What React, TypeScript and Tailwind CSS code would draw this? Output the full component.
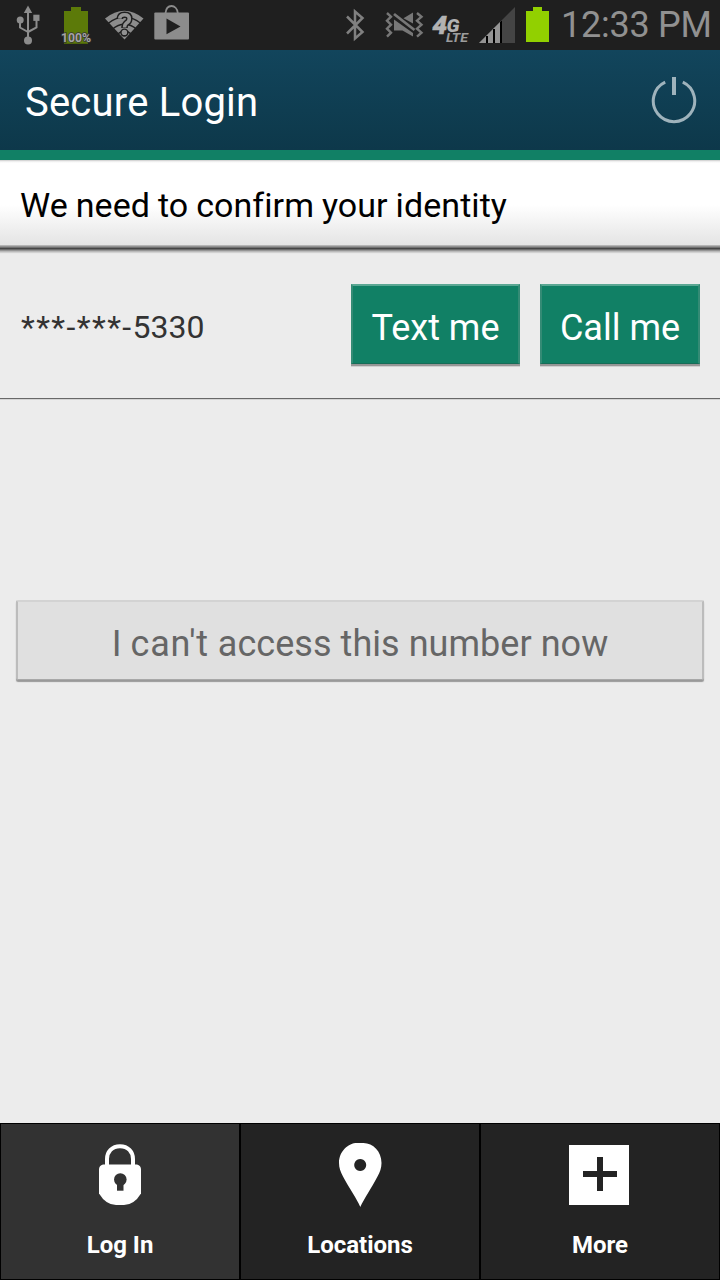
import React from "react";

function UsbIcon() {
  return (
    <svg width="26" height="50" viewBox="15 0 26 50" fill="none" stroke="#8c8c8c" strokeWidth="2">
      <path d="M28 11v28M20 21v6.500l8 4.500M36.500 19v8.500l-8.500 4.500" />
      <path d="M28 5.500l4.200 7.500h-8.400z" fill="#8c8c8c" stroke="none" />
      <circle cx="20.200" cy="20" r="3.500" fill="#8c8c8c" stroke="none" />
      <rect x="33.300" y="14.700" width="6.200" height="6.200" fill="#8c8c8c" stroke="none" />
      <circle cx="28" cy="40.500" r="4" fill="#8c8c8c" stroke="none" />
    </svg>
  );
}

function ChargeIcon() {
  return (
    <svg className="ml-[18px]" width="34" height="50" viewBox="59 0 34 50">
      <path d="M71 7h10v4h7v32.700H64V11h7z" fill="#5c7a09" />
      <text
        x="76"
        y="42"
        textAnchor="middle"
        fontFamily="Roboto, sans-serif"
        fontSize="12.500"
        fontWeight="700"
        fill="#a6a6a6"
        stroke="#333"
        strokeWidth="1.500"
        paintOrder="stroke"
        textLength="30"
        lengthAdjust="spacingAndGlyphs"
      >
        100%
      </text>
    </svg>
  );
}

function WifiIcon() {
  return (
    <svg className="ml-[11px]" width="42" height="50" viewBox="104 0 42 50">
      <path d="M105 18.500Q124.500 3 143.500 18.500L124.500 39.500z" fill="#8c8c8c" />
      <path
        d="M108 23.500Q124.500 10.500 141 23.500M112 29.500Q124.500 19 137 29.500M117 34.500Q124.500 28 132 34.500"
        fill="none"
        stroke="#1f1f1f"
        strokeWidth="1.400"
      />
      <path
        d="M119.700 18.700Q120 14.800 124.600 14.800Q129.300 14.800 129.300 18.700Q129.300 21.500 126.500 23Q124.500 24.500 124.500 28"
        fill="none"
        stroke="#1f1f1f"
        strokeWidth="6.500"
      />
      <circle cx="124.400" cy="32.600" r="4.200" fill="#1f1f1f" />
      <path
        d="M119.700 18.700Q120 14.800 124.600 14.800Q129.300 14.800 129.300 18.700Q129.300 21.500 126.500 23Q124.500 24.500 124.500 27.500"
        fill="none"
        stroke="#929292"
        strokeWidth="3.600"
      />
      <circle cx="124.400" cy="32.400" r="2.700" fill="#929292" />
    </svg>
  );
}

function StoreIcon() {
  return (
    <svg className="ml-[7px]" width="38" height="50" viewBox="153 0 38 50">
      <path d="M165.500 13c.5-4.500 3-7 6-7s5.800 2.500 6.300 7" fill="none" stroke="#8c8c8c" strokeWidth="1.800" />
      <rect x="154.300" y="12.600" width="34.700" height="27" rx="1" fill="#8c8c8c" />
      <path d="M166.500 18.600v15.600l14-7.800z" fill="#1f1f1f" />
    </svg>
  );
}

function BluetoothIcon() {
  return (
    <svg width="22" height="50" viewBox="344 0 22 50" fill="none" stroke="#808080" strokeWidth="2.500">
      <path d="M347 16.500l15.500 15.500-7.500 6.500V11.500l7.500 6.500L347 33.500" />
    </svg>
  );
}

function SilentIcon() {
  return (
    <svg className="ml-[18px]" width="40" height="50" viewBox="384 0 40 50">
      <path
        d="M387 13l4 3.700-4 4 4 4-4 4 4 4-4 4M417 13l4.500 3.700-4.500 4 4.500 4-4.500 4 4.500 4-4.500 4"
        fill="none"
        stroke="#777"
        strokeWidth="2.400"
      />
      <path d="M394 19.500L413 33V36.500L402.500 30.500H394zM403.500 18.300L413 12.500v11z" fill="#777" />
      <path d="M394 14L414.500 30" stroke="#777" strokeWidth="2.800" />
    </svg>
  );
}

function LteIcon() {
  return (
    <svg className="ml-[8px]" width="40" height="50" viewBox="432 0 40 50" fontFamily="Roboto, sans-serif" fontStyle="italic">
      <text x="432.300" y="34" fontSize="25.500" fontWeight="900" fill="#b2b2b2" stroke="#b2b2b2" strokeWidth=".5" textLength="15" lengthAdjust="spacingAndGlyphs">
        4
      </text>
      <text x="446.500" y="32" fontSize="18.500" fontWeight="900" fill="#b2b2b2" textLength="13" lengthAdjust="spacingAndGlyphs">
        G
      </text>
      <text x="446" y="42" fontSize="12.500" fontWeight="700" fill="#9c9c9c" textLength="22" lengthAdjust="spacingAndGlyphs">
        LTE
      </text>
    </svg>
  );
}

function SignalIcon() {
  return (
    <svg className="ml-[6px]" width="38" height="50" viewBox="478 0 38 50">
      <path d="M479 43L515 7V43z" fill="#444" />
      <path d="M479 43L502 20V43z" fill="#949494" />
      <path d="M486 36h2v7h-2zM493 29h2v14h-2zM500 22l2-2v23h-2z" fill="#000" />
    </svg>
  );
}

function BatteryIcon() {
  return (
    <svg className="ml-[9px]" width="25" height="50" viewBox="525 0 25 50">
      <path d="M533 7h9v4h7v31h-23V11h7z" fill="#92d000" />
    </svg>
  );
}

function StatusBar() {
  return (
    <div className="flex h-[50px] w-full items-center bg-[#1f1f1f] pl-[15px]">
      <UsbIcon />
      <ChargeIcon />
      <WifiIcon />
      <StoreIcon />
      <div className="ml-[153px] flex items-center">
        <BluetoothIcon />
        <SilentIcon />
        <LteIcon />
        <SignalIcon />
        <BatteryIcon />
        <span className="ml-[11px] text-[36px] leading-[50px] tracking-[-0.25px] whitespace-nowrap text-[#919191]">12:33 PM</span>
      </div>
    </div>
  );
}

function Header() {
  return (
    <header className="flex h-[110px] items-center justify-between border-b-[10px] border-[#118065] bg-linear-to-b from-[#12455c] to-[#0d384a] pr-[23px] pl-[25px]">
      <h1 className="pt-1.5 text-[40px] leading-[50px] tracking-[0.2px] text-white">Secure Login</h1>
      <svg width="46" height="50" viewBox="651 75 46 50" fill="none" stroke="#9fb3bc">
        <path d="M665.200 82.200A20.700 20.700 0 1 0 682.800 82.200" strokeWidth="3" />
        <path d="M674 77v18" strokeWidth="4" />
      </svg>
    </header>
  );
}

function ActionButton({ label, width }: { label: string; width: "wide" | "narrow" }) {
  return (
    <button
      className={`${width === "wide" ? "w-[169px]" : "w-[160px]"} h-[80px] border-x-2 border-t-2 border-b border-x-[#348b75] border-t-[#5ba793] border-b-[#176c57] bg-[#118065] pt-[7px] text-[36px] leading-[50px] whitespace-nowrap text-white shadow-[0_2px_0_#969696,0_3px_0_#d0d0d0]`}
    >
      {label}
    </button>
  );
}

function LockIcon() {
  return (
    <svg width="60" height="68" viewBox="90 1141 60 68">
      <path d="M107 1167v-8c0-7 5-12.800 13-12.800s13 5.800 13 12.800v8" fill="none" stroke="#fff" strokeWidth="4" />
      <path
        d="M103 1164.500h34q4 1 4 5v24Q134 1205 124 1205h-8Q106 1205 99 1193.500v-24q0-4 4-5z"
        fill="#fff"
      />
      <circle cx="120.300" cy="1179.500" r="6.300" fill="#323232" />
      <path d="M117 1183h6.500v7.700H117z" fill="#323232" />
    </svg>
  );
}

function PinIcon() {
  return (
    <svg width="60" height="68" viewBox="330 1141 60 68">
      <path
        fillRule="evenodd"
        fill="#fff"
        d="M360.300 1207C357 1199 349 1188 343 1176.500C340.500 1171.500 339 1168 339 1163C339 1151 348.500 1143 357 1143H363.500C373 1143 381.500 1151.500 381.500 1163C381.500 1168 380 1172 377.500 1176.500C371.500 1188 364 1199 360.300 1207zM360.200 1159a6 6 0 1 0 .01 0z"
      />
    </svg>
  );
}

function PlusIcon() {
  return (
    <svg className="-ml-0.5" width="60" height="68" viewBox="569 1141 60 68">
      <path fill="#fff" d="M569 1145h60v60h-60z" />
      <path fill="#232323" d="M597 1157h6v14h14v6h-14v14h-6v-14h-14v-6h14z" />
    </svg>
  );
}

function Tab({ label, active, icon }: { label: string; active?: boolean; icon: React.ReactNode }) {
  return (
    <button
      className={`${active ? "bg-[#323232]" : "bg-[#232323]"} flex h-[157px] w-[240px] flex-col items-center border border-black pt-[17px]`}
    >
      {icon}
      <span className="mt-[21px] text-[24px] leading-[30px] font-bold text-white">{label}</span>
    </button>
  );
}

export default function App() {
  return (
    <div className="flex h-[1280px] w-[720px] flex-col overflow-hidden bg-[#ececec] font-['Roboto',sans-serif]">
      <StatusBar />
      <Header />
      <div className="flex h-[85px] items-center bg-[linear-gradient(#c4c4c4_0,#e8e8e8_1px,#f6f6f6_2px,#fff_3px,#fff_45px,#e4e4e4_85px)] pt-[5px] pl-5">
        <p className="text-[34px] leading-[50px] tracking-[0.07px] [word-spacing:-0.6px] whitespace-nowrap text-black">
          We need to confirm your identity
        </p>
      </div>
      <div className="h-[9px] bg-[linear-gradient(#b4b4b4_0_1px,#929292_1px_2px,#707070_2px_3px,#454545_3px_4px,#6b6b6b_4px_5px,#959595_5px_6px,#b9b9b9_6px_7px,#d1d1d1_7px_8px,#e8e8e8_8px)]" />
      <div className="flex h-[145px] items-start justify-between border-b border-[#686868] pt-[30px] pr-5 pl-[21px] shadow-[0_1px_0_#d4d4d4]">
        <span className="mt-[18px] text-[32px] leading-[50px] whitespace-nowrap text-[#333]">
          <span className="tracking-[1.4px]">***-***-</span>5330
        </span>
        <div className="flex gap-5">
          <ActionButton label="Text me" width="wide" />
          <ActionButton label="Call me" width="narrow" />
        </div>
      </div>
      <button className="mx-4 mt-[201px] h-[80px] shrink-0 rounded-[2px] border-x-2 border-t-2 border-b border-x-[#bcbcbc] border-t-[#d3d3d3] border-b-[#a8a8a8] bg-[#e0e0e0] pt-[7px] text-[36px] leading-[50px] tracking-[0.04px] whitespace-nowrap text-[#666] shadow-[0_2px_1px_#999]">
        I <span className="tracking-[0.75px]">can't</span> access this number now
      </button>
      <nav className="mt-auto flex">
        <Tab label="Log In" active icon={<LockIcon />} />
        <Tab label="Locations" icon={<PinIcon />} />
        <Tab label="More" icon={<PlusIcon />} />
      </nav>
    </div>
  );
}
